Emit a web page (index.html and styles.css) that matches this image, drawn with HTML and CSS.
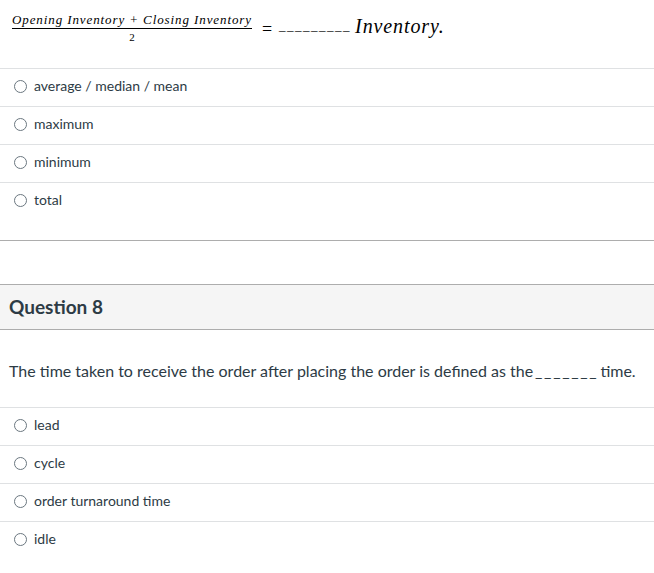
FILE: index.html
```html
<!DOCTYPE html>
<html>
<head>
<meta charset="utf-8">
<link rel="stylesheet" href="styles.css">
</head>
<body>
<div class="question">
  <div class="formula">
    <span class="frac">
      <span class="num">Opening Inventory + Closing Inventory</span>
      <span class="den">2</span>
    </span>
    <span class="eq">=</span>
    <span class="blank">_________</span>
    <span class="inv">Inventory.</span>
  </div>
  <div class="answers">
    <label class="answer"><span class="radio"></span>average / median / mean</label>
    <label class="answer"><span class="radio"></span>maximum</label>
    <label class="answer"><span class="radio"></span>minimum</label>
    <label class="answer"><span class="radio"></span>total</label>
  </div>
</div>

<div class="question q8">
  <div class="header">Question 8</div>
  <div class="text">The time taken to receive the order after placing the order is defined as the <span class="qblank">_______</span> time.</div>
  <div class="answers last">
    <label class="answer"><span class="radio"></span>lead</label>
    <label class="answer"><span class="radio"></span>cycle</label>
    <label class="answer"><span class="radio"></span>order turnaround time</label>
    <label class="answer"><span class="radio"></span>idle</label>
  </div>
</div>
</body>
</html>
```
FILE: styles.css
```css
html, body {
  margin: 0;
  padding: 0;
  background: #fff;
}
body {
  font-family: Lato, "Liberation Sans", sans-serif;
  color: #2d3b45;
  width: 654px;
}
.formula {
  height: 68px;
  display: flex;
  align-items: flex-start;
  padding-left: 12px;
  box-sizing: border-box;
  font-family: "Liberation Serif", "DejaVu Serif", serif;
  color: #000;
}
.frac {
  display: flex;
  flex-direction: column;
  align-items: center;
  margin-top: 12px;
}
.num {
  font-style: italic;
  font-size: 13px;
  letter-spacing: 0.9px;
  line-height: 15px;
  padding-bottom: 1px;
  border-bottom: 1.5px solid #000;
}
.den {
  font-size: 11px;
  line-height: 16px;
}
.eq {
  font-size: 18px;
  margin: 21px 7px 0 10px;
  line-height: 17px;
}
.blank {
  font-size: 13px;
  margin-top: 17px;
  line-height: 17px;
  letter-spacing: 1.5px;
}
.inv {
  font-style: italic;
  font-size: 20px;
  letter-spacing: 0.9px;
  line-height: 20px;
  margin: 16px 0 0 4px;
}
.answers {
  display: flex;
  flex-direction: column;
  padding-bottom: 20px;
  border-bottom: 1px solid #adadad;
}
.answers.last {
  border-bottom: none;
}
.answer {
  height: 38px;
  border-top: 1px solid #dfe1e3;
  box-sizing: border-box;
  display: flex;
  align-items: center;
  font-size: 14px;
  padding-left: 14px;
  padding-bottom: 4px;
}
.radio {
  width: 11px;
  height: 11px;
  border: 1px solid #6b7780;
  border-radius: 50%;
  margin-right: 7px;
  margin-top: 2px;
  background: #fff;
}
.q8 {
  margin-top: 43px;
}
.header {
  height: 46px;
  box-sizing: border-box;
  background: #f5f5f5;
  border-top: 1px solid #adadad;
  border-bottom: 1px solid #adadad;
  display: flex;
  align-items: center;
  padding-left: 9px;
  padding-bottom: 1px;
  font-size: 19px;
  font-weight: 700;
  color: #2d3b45;
}
.text {
  height: 77px;
  display: flex;
  align-items: center;
  padding-left: 9px;
  font-size: 16px;
  padding-top: 3px;
  box-sizing: border-box;
}
.qblank {
  letter-spacing: 1.7px;
  margin: 0 2px;
}
```
